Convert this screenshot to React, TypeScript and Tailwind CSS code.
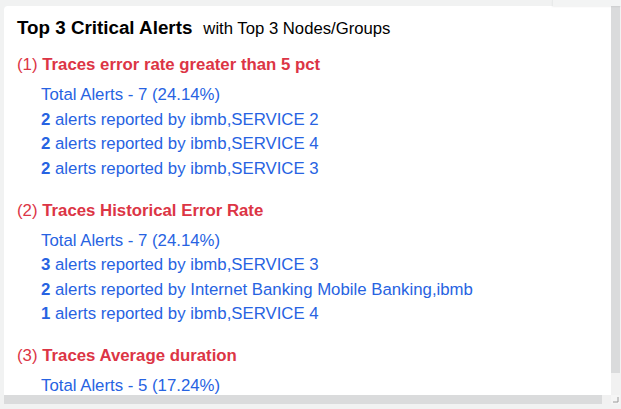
const sections = [
  {
    title: "Traces error rate greater than 5 pct",
    total: "Total Alerts - 7 (24.14%)",
    rows: [
      { count: 2, by: "ibmb,SERVICE 2" },
      { count: 2, by: "ibmb,SERVICE 4" },
      { count: 2, by: "ibmb,SERVICE 3" },
    ],
  },
  {
    title: "Traces Historical Error Rate",
    total: "Total Alerts - 7 (24.14%)",
    rows: [
      { count: 3, by: "ibmb,SERVICE 3" },
      { count: 2, by: "Internet Banking Mobile Banking,ibmb" },
      { count: 1, by: "ibmb,SERVICE 4" },
    ],
  },
  {
    title: "Traces Average duration",
    total: "Total Alerts - 5 (17.24%)",
    rows: [],
  },
];

export default function App() {
  return (
    <div className="relative h-[409px] w-[621px] overflow-hidden bg-[#f1f2f2] font-['Liberation_Sans',Arial,sans-serif]">
      {/* corner of the panel above */}
      <div className="absolute right-0 top-0 h-[6px] w-[69px] border-l border-[#e8eaea] bg-[#f3f4f4] shadow-[0_1px_2px_rgba(0,0,0,0.06)]" />

      <div className="ml-[4px] mt-[6px] flex h-[398px] w-[616px] flex-col">
        <div className="flex h-[389px]">
          {/* card body */}
          <div className="h-full w-[607px] overflow-hidden rounded-tl-[4px] bg-white pl-[13px] pt-[10px]">
            <div className="flex h-[24px] items-baseline leading-[24px] text-black">
              <span className="text-[18.8px] font-bold">Top 3 Critical Alerts</span>
              <span className="ml-[11px] text-[16.7px]">with Top 3 Nodes/Groups</span>
            </div>

            <div className="mt-[13px] flex flex-col gap-[17.5px] text-[16.8px] leading-[24.4px]">
              {sections.map((s, i) => (
                <div key={i}>
                  <div className="text-[#dc3545]">
                    ({i + 1}) <span className="font-bold">{s.title}</span>
                  </div>
                  <div className="mt-[6px] pl-[24px] text-[#2763e2]">
                    <div>{s.total}</div>
                    {s.rows.map((r, j) => (
                      <div key={j}>
                        <span className="font-bold">{r.count}</span> alerts reported by {r.by}
                      </div>
                    ))}
                  </div>
                </div>
              ))}
            </div>
          </div>

          {/* vertical scrollbar */}
          <div className="flex w-[9px] flex-col bg-[#f1f1f1]">
            <div className="h-[367px] bg-[#dadbdc]" />
          </div>
        </div>

        {/* horizontal scrollbar */}
        <div className="flex h-[9px]">
          <div className="w-[598px] bg-[#dadbdc]" />
          <div className="w-[9px] bg-[#f1f1f1]" />
          <div className="relative w-[9px] bg-[#f5f5f5]">
            <svg width="9" height="9" viewBox="0 0 9 9" className="absolute left-0 top-0">
              <path d="M7 2V7H2" fill="none" stroke="#9a9a9a" strokeWidth="1" />
            </svg>
          </div>
        </div>
      </div>
    </div>
  );
}
